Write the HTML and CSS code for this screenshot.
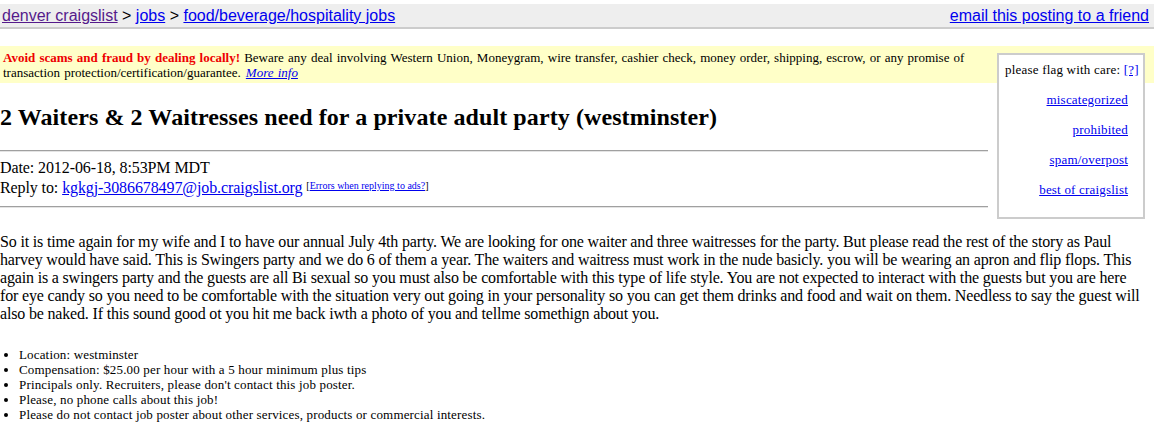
FILE: index.html
```html
<!DOCTYPE html>
<html>
<head>
<meta charset="utf-8">
<title>2 Waiters &amp; 2 Waitresses need for a private adult party (westminster)</title>
<link rel="stylesheet" href="styles.css">
</head>
<body>
<div class="bchead">
  <div class="crumbs"><a class="visited" href="#">denver craigslist</a> &gt; <a href="#">jobs</a> &gt; <a href="#">food/beverage/hospitality jobs</a></div>
  <div class="ef"><a href="#">email this posting to a friend</a></div>
</div>
<div class="flag">
  <div class="head">please flag with care: <a href="#">[?]</a></div>
  <a class="flink" href="#">miscategorized</a>
  <a class="flink" href="#">prohibited</a>
  <a class="flink" href="#">spam/overpost</a>
  <a class="flink" href="#">best of craigslist</a>
</div>
<div class="scam"><b class="warn">Avoid scams and fraud by dealing locally!</b> Beware any deal involving Western Union, Moneygram, wire transfer, cashier check, money order, shipping, escrow, or any promise of transaction protection/certification/guarantee. <a class="more" href="#">More info</a></div>
<h2 class="title">2 Waiters &amp; 2 Waitresses need for a private adult party (westminster)</h2>
<hr class="rule rule-top">
<div class="meta">
  <div class="date">Date: 2012-06-18, 8:53PM MDT</div>
  <div class="reply">Reply to: <a href="#">kgkgj-3086678497@job.craigslist.org</a> <sup class="errs">[<a href="#">Errors when replying to ads?</a>]</sup></div>
</div>
<hr class="rule rule-bottom">
<div class="posting">So it is time again for my wife and I to have our annual July 4th party. We are looking for one waiter and three waitresses for the party. But please read the rest of the story as Paul<br>harvey would have said. This is Swingers party and we do 6 of them a year. The waiters and waitress must work in the nude basicly. you will be wearing an apron and flip flops. This<br>again is a swingers party and the guests are all Bi sexual so you must also be comfortable with this type of life style. You are not expected to interact with the guests but you are here<br>for eye candy so you need to be comfortable with the situation very out going in your personality so you can get them drinks and food and wait on them. Needless to say the guest will<br>also be naked. If this sound good ot you hit me back iwth a photo of you and tellme somethign about you.</div>
<ul class="facts">
  <li>Location: westminster</li>
  <li>Compensation: $25.00 per hour with a 5 hour minimum plus tips</li>
  <li>Principals only. Recruiters, please don't contact this job poster.</li>
  <li>Please, no phone calls about this job!</li>
  <li>Please do not contact job poster about other services, products or commercial interests.</li>
</ul>
</body>
</html>
```
FILE: styles.css
```css
html, body {
  margin: 0;
  padding: 0;
  background: #fff;
}
body {
  padding-top: 4px;
  color: #000;
  font-family: "Liberation Serif", "Times New Roman", serif;
  font-size: 16px;
}
a {
  color: #0000ee;
  text-decoration: underline;
}
a.visited {
  color: #551a8b;
}
.bchead {
  display: flex;
  justify-content: space-between;
  align-items: center;
  background: #eeeeee;
  border-bottom: 2px solid #cccccc;
  padding: 2px 5px 2px 2px;
  font-family: "Liberation Sans", Arial, sans-serif;
  font-size: 16px;
  line-height: 19px;
  white-space: nowrap;
}
.flag {
  float: right;
  width: 144px;
  margin: 24px 9px 0 9px;
  padding: 7px 0 20px;
  border: 2px solid #cccccc;
  background: #fff;
  display: flex;
  flex-direction: column;
  gap: 15px;
  font-size: 13px;
  line-height: 15px;
  letter-spacing: 0.2px;
}
.flag .head {
  padding-left: 6px;
  white-space: nowrap;
}
.flag .flink {
  align-self: flex-end;
  margin-right: 15px;
}
.scam {
  margin-top: 17px;
  padding: 4px 3px 3px 3px;
  background: #ffffc8;
  font-size: 13px;
  line-height: 15px;
  word-spacing: 0.9px;
}
.warn {
  color: #ee0000;
}
.more {
  font-style: italic;
  margin-left: 1px;
}
.title {
  margin: 20px 0 19px;
  font-size: 24px;
  line-height: 28px;
  font-weight: bold;
  letter-spacing: 0.09px;
}
.rule {
  display: block;
  overflow: hidden;
  height: 0;
  border: 0;
  border-top: 1px solid #a0a0a0;
  border-bottom: 1px solid #e4e4e4;
  margin: 0;
}
.meta {
  margin: 6px 0 8px;
  letter-spacing: -0.1px;
}
.date {
  line-height: 19px;
}
.reply {
  line-height: 21px;
}
.errs {
  font-size: 10px;
  line-height: 0;
  vertical-align: 4px;
  letter-spacing: 0;
}
.posting {
  margin-top: 25px;
  line-height: 18px;
  letter-spacing: -0.17px;
}
.facts {
  margin: 24px 0 0;
  padding-left: 19px;
  font-size: 13px;
  line-height: 15px;
  letter-spacing: 0.16px;
}
```
